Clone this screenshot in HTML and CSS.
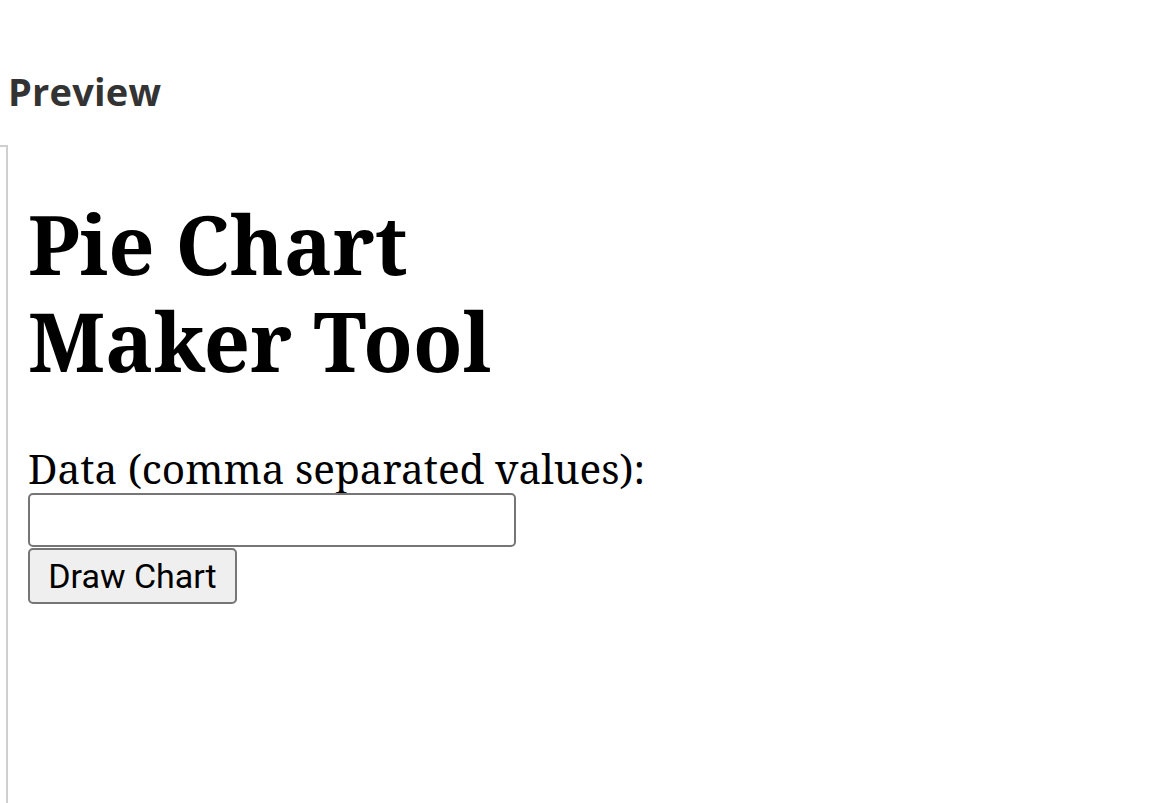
FILE: index.html
```html
<!DOCTYPE html>
<html lang="en">
<head>
<meta charset="utf-8">
<title>Preview</title>
<link rel="stylesheet" href="styles.css">
</head>
<body>
  <header class="topbar">
    <h2 class="preview-title">Preview</h2>
  </header>
  <main class="workspace">
    <div class="side-edge"></div>
    <section class="frame">
      <h1 class="tool-title">Pie Chart<br>Maker Tool</h1>
      <label class="data-label" for="data">Data (comma separated values):</label>
      <input class="data-input" id="data" type="text">
      <button class="draw-btn" type="button">Draw Chart</button>
    </section>
  </main>
</body>
</html>
```

FILE: styles.css
```css
* { box-sizing: border-box; }
html, body { margin: 0; padding: 0; background: #fff; }
body { width: 1151px; height: 803px; overflow: hidden; }

.topbar { height: 145px; padding: 65px 0 0 8px; }
.preview-title {
  margin: 0;
  font-family: "Open Sans", "Lato", sans-serif;
  font-weight: 700;
  font-size: 38px;
  line-height: 52px;
  color: #333;
  letter-spacing: 0.2px;
}

.workspace { display: flex; height: 658px; }
.side-edge {
  width: 8px;
  flex: none;
  border-top: 2px solid #cfcfcf;
  border-right: 2px solid #cfcfcf;
}
.frame {
  flex: 1;
  display: flex;
  flex-direction: column;
  align-items: flex-start;
  padding: 0 0 0 20px;
  font-family: "Noto Serif", "DejaVu Serif", serif;
  color: #000;
}
.tool-title {
  margin: 50px 0 56px;
  font-size: 81px;
  line-height: 97px;
  font-weight: 700;
}
.data-label {
  font-size: 40.5px;
  line-height: 48px;
}
.data-input {
  width: 488px;
  height: 54px;
  margin: 0;
  border: 2px solid #767676;
  border-radius: 5px;
  background: #fff;
}
.draw-btn {
  margin-top: 1px;
  width: 209px;
  height: 56px;
  padding: 0;
  border: 2px solid #767676;
  border-radius: 5px;
  background: #efefef;
  font-family: "Roboto", "Liberation Sans", sans-serif;
  font-size: 34px;
  color: #000;
}
```
